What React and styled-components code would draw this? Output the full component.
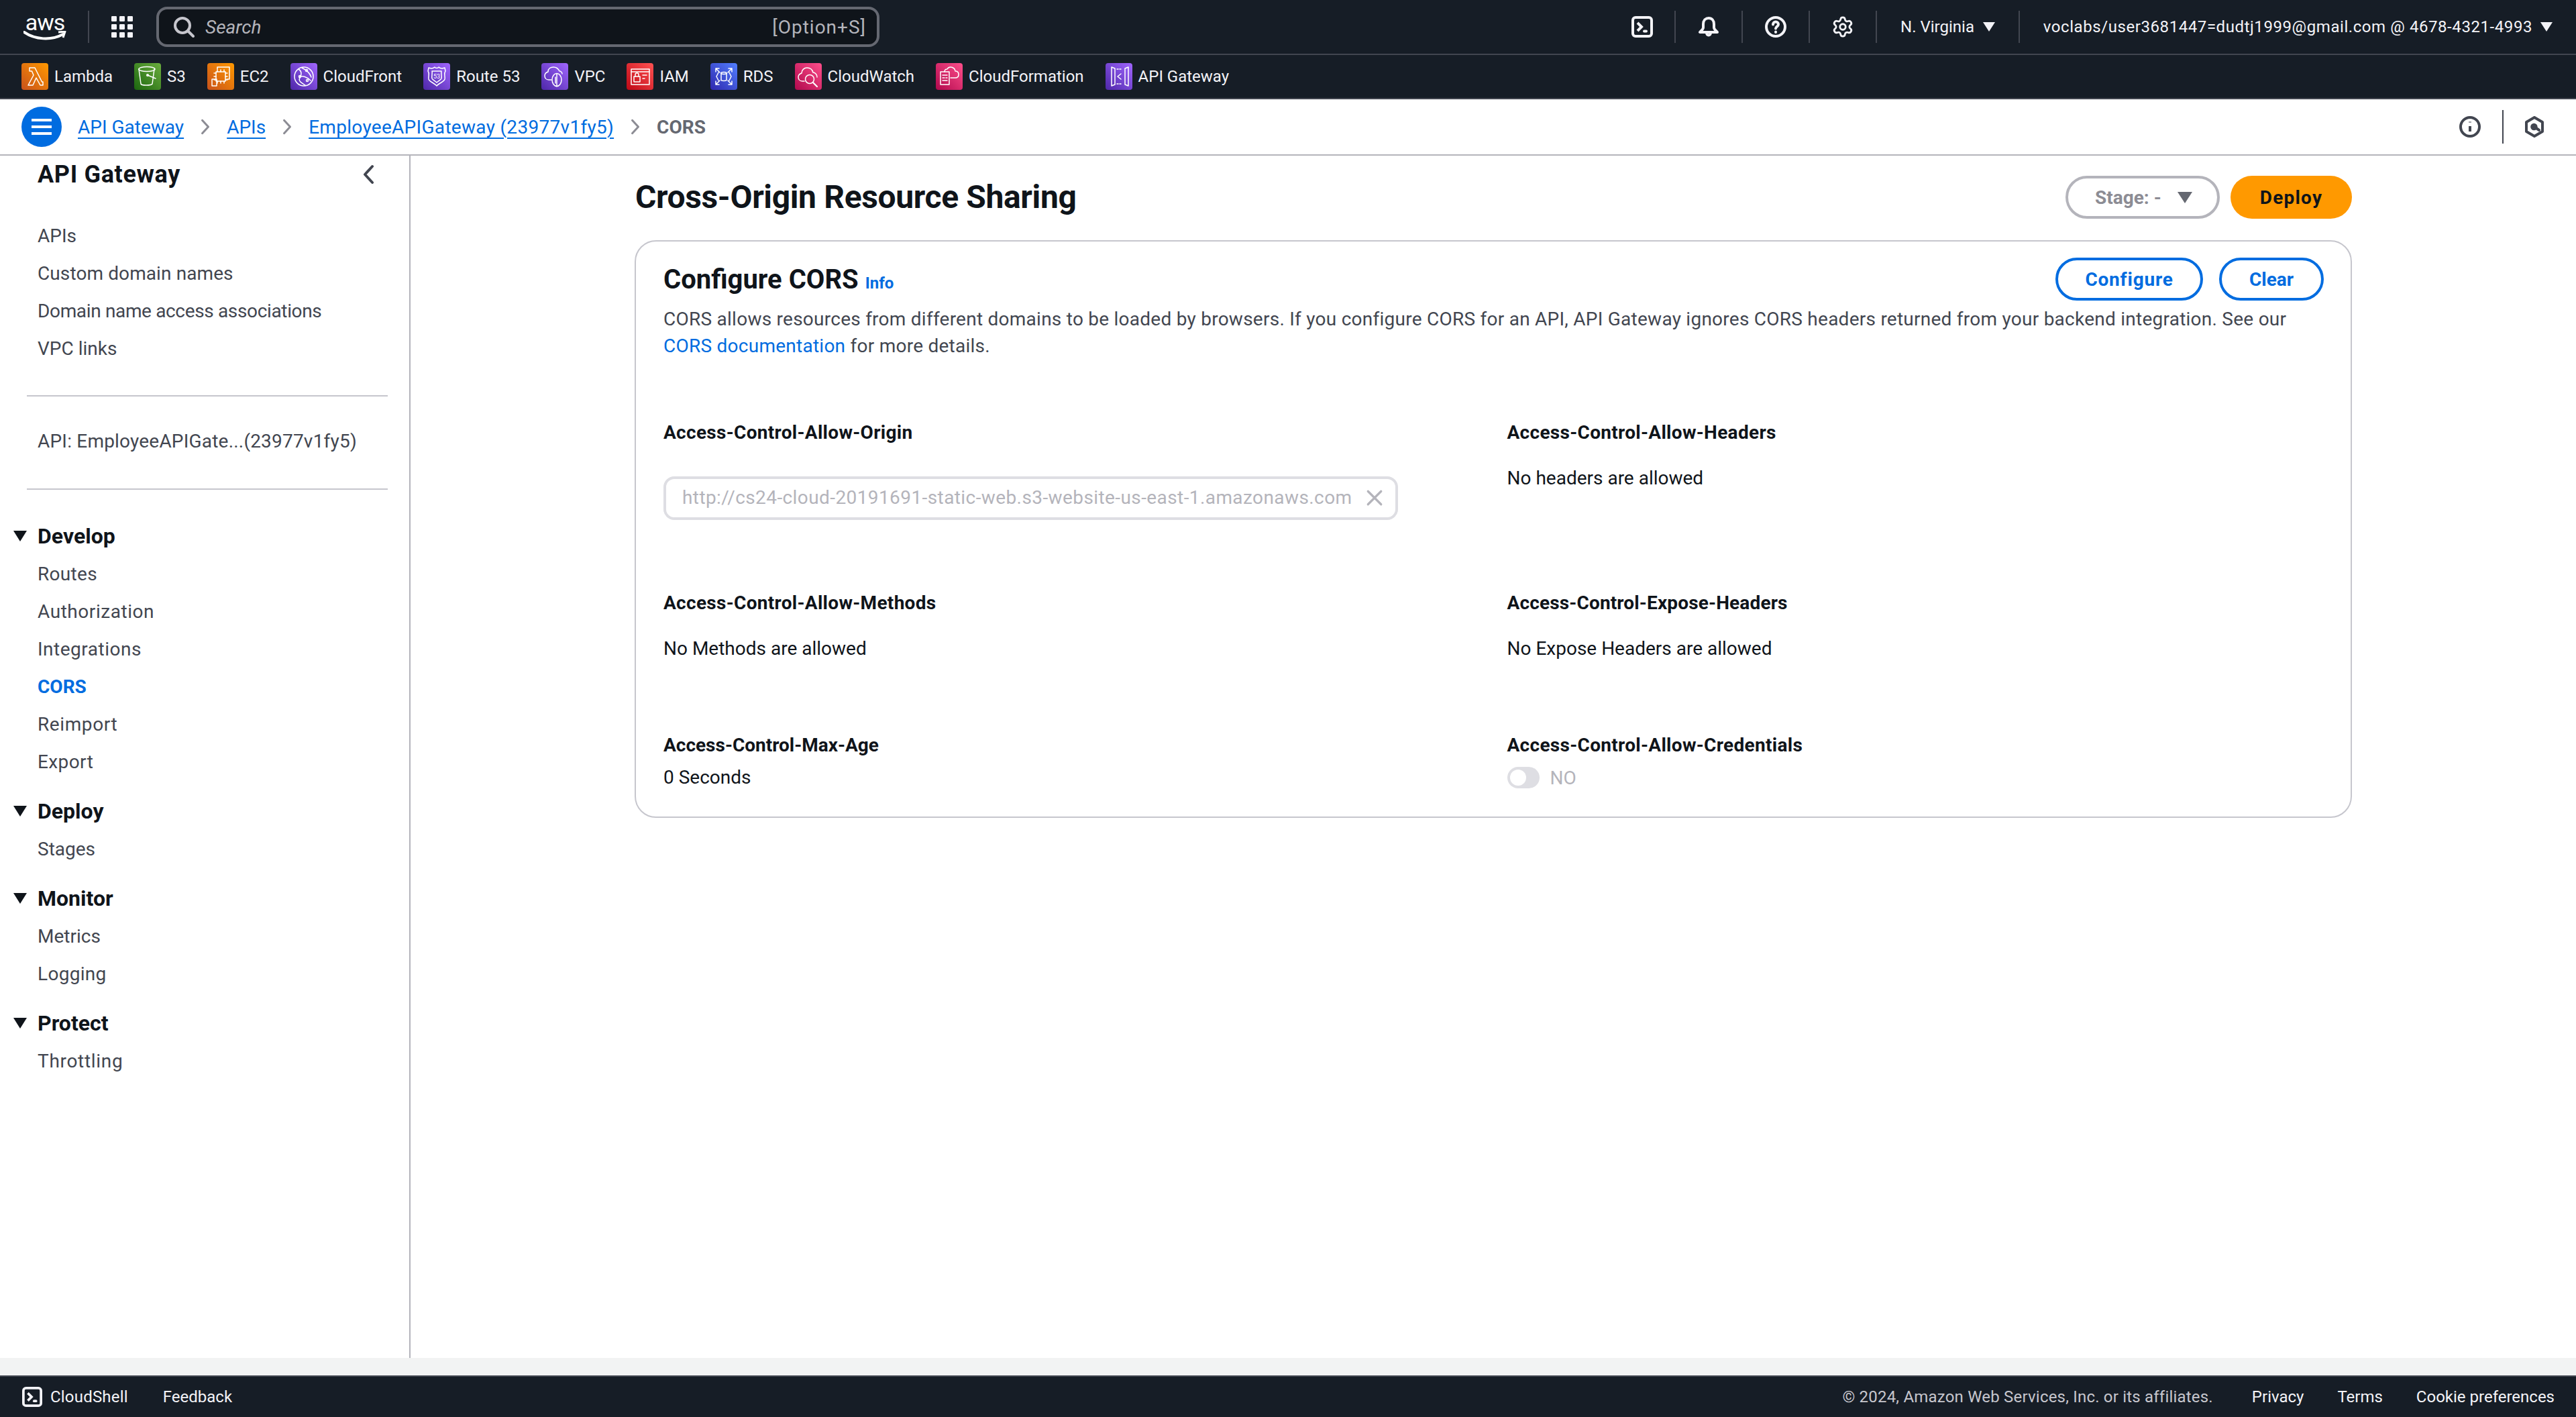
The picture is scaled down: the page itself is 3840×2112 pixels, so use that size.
import React from 'react';
import styled, { createGlobalStyle } from 'styled-components';
import { Settings } from 'lucide-react';

const FONT = 'Roboto, "Noto Sans", Arial, sans-serif';

const Global = createGlobalStyle`
  html, body { margin: 0; padding: 0; background: #fff; }
  body { font-family: ${FONT}; -webkit-font-smoothing: antialiased; }
  * { box-sizing: border-box; }
`;

const Page = styled.div`
  width: 3840px; height: 2112px; display: flex; flex-direction: column; overflow: hidden; background: #fff;
`;

/* Top navigation */
const TopBar = styled.header`
  height: 82px; flex: none; display: flex; align-items: center; background: #161d26;
  border-bottom: 2px solid #424650; padding: 0 35px; color: #f3f3f7;
`;
const Logo = styled.div`
  width: 64px; height: 44px; display: flex; flex-direction: column; align-items: center; flex: none; position: relative;
`;
const LogoWord = styled.span`
  font-size: 34px; line-height: 30px; color: #fff; font-weight: 400; letter-spacing: -1px; height: 28px;
`;
const BarRule = styled.span`
  width: 2px; height: ${p => p.$h || 48}px; background: #424650; flex: none; margin: ${p => p.$m || '0'};
`;
const SearchBox = styled.div`
  width: 1078px; height: 60px; margin-left: 34px; border: 4px solid #656871; border-radius: 16px; background: #0f141a;
  display: flex; align-items: center; padding: 0 16px 0 21px; color: #b4b4bb; font-size: 28px;
`;
const SearchText = styled.span`
  font-style: italic; margin-left: 16px; flex: 1;
`;
const Shortcut = styled.span`
  letter-spacing: 1px;
`;
const NavRight = styled.div`
  margin-left: auto; display: flex; align-items: center; height: 48px;
`;
const NavIcon = styled.span`
  width: ${p => p.$w || 98}px; display: flex; align-items: center; justify-content: ${p => p.$j || 'center'}; flex: none;
`;
const NavText = styled.span`
  font-size: 24px; color: #f3f3f7; white-space: nowrap; letter-spacing: ${p => p.$ls || 0}px;
`;
const CaretDown = styled.span`
  width: 0; height: 0; flex: none; display: inline-block;
  border-left: ${p => p.$s || 9}px solid transparent; border-right: ${p => p.$s || 9}px solid transparent;
  border-top: ${p => (p.$s || 9) * 1.6}px solid ${p => p.$c || '#f3f3f7'};
  margin-left: ${p => p.$ml || 14}px;
`;

/* Favourites */
const FavBar = styled.nav`
  height: 66px; flex: none; display: flex; align-items: center; gap: 32px; background: #161d26;
  border-bottom: 2px solid #424650; padding: 0 0 0 32px;
`;
const Fav = styled.span`
  display: flex; align-items: center; gap: 9px; font-size: 24px; color: #f3f3f7; white-space: nowrap;
`;
const Tile = styled.span`
  width: 40px; height: 40px; border-radius: 4px; flex: none; display: flex;
  background: linear-gradient(45deg, ${p => p.$from}, ${p => p.$to});
`;

/* Breadcrumbs */
const CrumbBar = styled.div`
  height: 84px; flex: none; display: flex; align-items: center; border-bottom: 2px solid #b4b4bb; padding: 0 46px 0 32px;
`;
const MenuButton = styled.span`
  width: 60px; height: 60px; border-radius: 50%; background: #006ce0; display: flex; flex-direction: column;
  align-items: center; justify-content: center; gap: 6px; flex: none; margin-right: 24px;
`;
const MenuLine = styled.i`
  display: block; width: 30px; height: 4px; background: #fff;
`;
const Crumb = styled.a`
  font-size: 28px; color: #006ce0; text-decoration: underline; text-underline-offset: 6px; text-decoration-thickness: 2px; white-space: nowrap;
  letter-spacing: ${p => p.$ls || 0}px;
`;
const CrumbSep = styled.span`
  width: 64px; display: flex; justify-content: center; flex: none;
`;
const CrumbCurrent = styled.span`
  font-size: 28px; color: #656871; font-weight: 700;
`;
const CrumbTools = styled.div`
  margin-left: auto; display: flex; align-items: center; height: 50px;
`;

/* Main */
const Main = styled.div`
  flex: 1; display: flex; min-height: 0;
`;
const Sidebar = styled.aside`
  width: 612px; flex: none; border-right: 2px solid #b4b4bb; padding: 6px 32px 0 0; color: #424650;
`;
const SideHead = styled.div`
  display: flex; align-items: center; justify-content: space-between; padding: 0 12px 0 56px; height: 44px; margin-bottom: 42px;
`;
const SideTitle = styled.h2`
  margin: 0; font-size: 36px; font-weight: 700; color: #0f141a; line-height: 44px; letter-spacing: .65px;
`;
const SideItem = styled.div`
  height: 56px; line-height: 56px; padding-left: 56px; font-size: 28px; white-space: nowrap;
  letter-spacing: ${p => p.$ls ?? 0.3}px;
  color: ${p => (p.$active ? '#006ce0' : '#424650')}; font-weight: ${p => (p.$active ? 700 : 400)};
`;
const SideRule = styled.hr`
  margin: ${p => p.$m || '41px 0 39px 40px'}; border: 0; height: 2px; background: #c6c6cd;
`;
const Section = styled.section`
  margin-top: ${p => p.$mt ?? 15}px;
`;
const SectionHead = styled.div`
  height: 59px; display: flex; align-items: center; padding-left: 20px; font-size: 32px; font-weight: 700; color: #0f141a;
`;
const SectionCaret = styled.span`
  width: 0; height: 0; margin-right: 16px; border-left: 10px solid transparent; border-right: 10px solid transparent; border-top: 16px solid #0f141a;
`;

const Content = styled.main`
  flex: 1; min-width: 0; padding: 30px 0 0; display: flex; justify-content: center;
`;
const Column = styled.div`
  width: 2560px;
`;
const PageHead = styled.div`
  display: flex; align-items: center; height: 64px; gap: 16px; margin-bottom: 32px;
`;
const PageTitle = styled.h1`
  margin: 0 auto 0 0; font-size: 48px; font-weight: 700; color: #0f141a; line-height: 64px; letter-spacing: -.36px; padding-left: 1px;
`;
const StageSelect = styled.span`
  height: 64px; width: 230px; border: 4px solid #b4b4bb; border-radius: 32px; display: flex; align-items: center; padding-left: 40px;
  font-size: 28px; font-weight: 700; color: #8c8c94;
`;
const DeployButton = styled.span`
  height: 64px; width: 181px; border-radius: 32px; background: #ff9900; display: flex; align-items: center; justify-content: center;
  font-size: 28px; font-weight: 700; color: #0f141a; letter-spacing: 1.2px;
`;
const Card = styled.section`
  border: 2px solid #c6c6cd; border-radius: 32px; padding: 24px 40px 38px 41px;
`;
const CardHead = styled.div`
  display: flex; align-items: center; height: 64px; gap: 24px;
`;
const CardTitle = styled.h2`
  margin: 0 auto 0 0; font-size: 40px; font-weight: 700; color: #0f141a; white-space: nowrap;
`;
const Info = styled.a`
  font-size: 24px; font-weight: 700; color: #006ce0; margin-left: 10px;
`;
const OutlineButton = styled.span`
  height: 64px; width: ${p => p.$w}px; border: 4px solid #006ce0; border-radius: 32px; display: flex; align-items: center; justify-content: center;
  font-size: 28px; font-weight: 700; color: #006ce0; letter-spacing: ${p => p.$ls || 0}px;
`;
const Desc = styled.p`
  margin: 8px 0 0; font-size: 28px; line-height: 40px; color: #424650; letter-spacing: .25px;
`;
const DocLink = styled.a`
  color: #006ce0;
`;
const Fields = styled.div`
  display: grid; grid-template-columns: 1fr 1fr; column-gap: 40px; row-gap: 104px; margin-top: 89px;
`;
const Field = styled.div``;
const Label = styled.div`
  font-size: 28px; line-height: 40px; font-weight: 700; color: #0f141a; letter-spacing: ${p => p.$ls ?? 0.3}px;
`;
const Value = styled.div`
  font-size: 28px; line-height: 40px; color: #0f141a; margin-top: ${p => p.$mt ?? 28}px;
`;
const ClearInput = styled.div`
  width: 1095px; height: 65px; margin-top: 45px; border: 4px solid #dedee3; border-radius: 16px; display: flex; align-items: center;
  padding: 0 18px 2px 24px; font-size: 28px; color: #b4b4bb; white-space: nowrap; justify-content: space-between; letter-spacing: .41px;
`;
const ToggleRow = styled.div`
  display: flex; align-items: center; gap: 16px; margin-top: 8px; height: 40px; font-size: 28px; color: #b4b4bb;
`;
const Toggle = styled.span`
  width: 48px; height: 32px; border-radius: 16px; background: #dedee3; padding: 4px; display: flex; flex: none;
`;
const ToggleKnob = styled.i`
  width: 24px; height: 24px; border-radius: 50%; background: #fff; display: block;
`;

const Strip = styled.div`
  height: 26px; flex: none; background: #f2f3f3;
`;
const Footer = styled.footer`
  height: 62px; flex: none; background: #161d26; border-top: 2px solid #424650; display: flex; align-items: center;
  padding: 0 32px 0 33px; font-size: 24px; color: #f3f3f7;
`;
const FooterLeft = styled.div`
  display: flex; align-items: center;
`;
const FooterLink = styled.span`
  margin-left: ${p => p.$ml || 0}px; white-space: nowrap; letter-spacing: ${p => p.$ls || 0}px;
`;
const Copyright = styled.span`
  margin-left: auto; color: #c6c6cd; white-space: nowrap; letter-spacing: .2px;
`;

/* Icons */
const Stroke = ({ size = 32, color = '#f3f3f7', sw = 2, children }) => (
  <svg width={size} height={size} viewBox="0 0 16 16" fill="none" stroke={color} strokeWidth={sw} strokeLinecap="round" strokeLinejoin="round">
    {children}
  </svg>
);
const ShellIcon = ({ size = 32 }) => (
  <Stroke size={size} sw={2}>
    <rect x="1" y="1" width="14" height="14" rx="2" />
    <path d="M4.500 5 7.500 8 4.500 11" strokeLinecap="butt" strokeLinejoin="miter" />
    <path d="M9.500 11.300h1.500" />
  </Stroke>
);
const GridIcon = () => (
  <svg width="34" height="34" viewBox="0 0 34 34" fill="#f3f3f7">
    {[1, 13, 25].map(y => [1, 13, 25].map(x => <rect key={`${x}-${y}`} x={x} y={y} width="8" height="8" rx="1.2" />))}
  </svg>
);

const Glyph = ({ children }) => (
  <svg width="40" height="40" viewBox="0 0 40 40" fill="none" stroke="#fff" strokeWidth="1.5" strokeLinejoin="round" strokeLinecap="round">
    {children}
  </svg>
);
const FAVS = [
  ['Lambda', '#c8511b', '#ff9900', <path key="a" d="M10 33h7l5-11 6 11h4v-5h-1.500L20 7h-8v5h3.500l2.500 6-8 15z" />],
  ['S3', '#1b660f', '#6cae3e', <g key="a"><ellipse cx="19" cy="9" rx="12" ry="3.500" /><path d="M7 9l3 22c.300 1.500 4 2 8 2s8-.500 9-2l3-22" /><path d="M20 18l12 5" /><circle cx="20" cy="18" r="1.300" /></g>],
  ['EC2', '#c8511b', '#ff9900', <g key="a"><rect x="13" y="13" width="14" height="14" /><path d="M15 10v3M20 10v3M25 10v3M15 27v3M20 27v3M25 27v3M10 15h3M10 20h3M10 25h3M27 15h3M27 20h3M27 25h3" /><path d="M15 9V6h18v18h-4M7 24h7v10H7z" /></g>],
  ['CloudFront', '#4d27a8', '#a166ff', <g key="a"><circle cx="20" cy="20" r="14" /><path d="M12 9c5 3 5 8 2 13s3 8 8 11M17 7c6 3 12 8 14 14M13 21c5-3 12 0 17 5" /><circle cx="14" cy="20" r="1.500" /><circle cx="24" cy="11" r="1.500" /><circle cx="25" cy="26" r="1.500" /></g>],
  ['Route 53', '#4d27a8', '#a166ff', <g key="a"><path d="M12 8c2 0 4-1 5-2 1 2 5 2 6 0 1 1 3 2 5 2l4-1 1 5c-3 4 0 7-1 12-1 4-9 6-12 10-3-4-11-6-12-10-1-5 2-8-1-12l1-5z" /><path d="M13 12h14c-1 4 1 7 0 11-1 2-5 4-7 6-2-2-6-4-7-6-1-4 1-7 0-11z" /><text x="20" y="23" fontSize="9" fill="#fff" stroke="none" textAnchor="middle" fontFamily={FONT}>53</text></g>],
  ['VPC', '#4d27a8', '#a166ff', <g key="a"><path d="M15 25h-4c-4 0-6-3-6-6s2-5 5-6c0-5 4-7 8-7s7 2 9 6c2 0 4 2 4 4" /><ellipse cx="23" cy="25" rx="7" ry="9.500" /><path d="M23 16v19" /><path d="M21 21v9" /></g>],
  ['IAM', '#bd0816', '#ff5252', <g key="a"><rect x="7" y="9" width="27" height="23" /><path d="M7 13h27" /><rect x="11" y="20" width="9" height="8" /><path d="M13 20v-3c0-3 5-3 5 0v3" /><path d="M24 18h6M24 23h3" /></g>],
  ['RDS', '#2e27ad', '#527fff', <g key="a"><path d="M8 8l6 6M8 8v5M8 8h5M32 8l-6 6M32 8v5M32 8h-5M8 32l6-6M8 32v-5M8 32h5M32 32l-6-6M32 32v-5M32 32h-5" /><ellipse cx="20" cy="15" rx="4" ry="1.500" /><path d="M16 15v10c0 2 8 2 8 0V15" /><path d="M12 14l-3 6 3 6M28 14l3 6-3 6" /></g>],
  ['CloudWatch', '#b0084d', '#ff4f8b', <g key="a"><path d="M14 27h-3c-4 0-6-3-6-6s2-5 5-6c0-5 4-8 8-8 5 0 8 3 9 7 3 0 6 3 6 7" /><circle cx="22" cy="24" r="6.500" /><path d="M27 29l6 6" strokeWidth="2.200" /></g>],
  ['CloudFormation', '#b0084d', '#ff4f8b', <g key="a"><path d="M13 13c0-3 2-4 4-4 1-2 3-3 5-3 4 0 7 3 7 6 3 0 5 2 5 5s-2 5-5 5h-7" /><path d="M7 13h13v19H7z" /><path d="M10 18h7M10 22h3M15 22h2M10 26h7" /></g>],
  ['API Gateway', '#4d27a8', '#a166ff', <g key="a"><path d="M9 6l5 2v24l-5 2zM34 6l-5 2v24l5 2z" /><path d="M17 9h6M17 31h6" strokeDasharray="2 2" /><path d="M23 16l-5 4 5 4" /></g>],
];

const Chevron = () => (
  <Stroke size={24} color="#8c8c94"><path d="M5 1.500 11 8l-6 6.500" /></Stroke>
);

export default function App() {
  return (
    <Page>
      <Global />
      <TopBar>
        <Logo>
          <LogoWord>aws</LogoWord>
          <svg width="64" height="16" viewBox="0 0 64 16" fill="none">
            <path d="M1 2c16 11 40 13 58 3" stroke="#fff" strokeWidth="4" strokeLinecap="round" />
            <path d="M52 2l10-1-3 9" stroke="#fff" strokeWidth="3" strokeLinejoin="round" />
          </svg>
        </Logo>
        <BarRule $h={48} $m="0 32px 0 32px" />
        <GridIcon />
        <SearchBox>
          <Stroke size={32} color="#c6c6cd">
            <circle cx="7" cy="7" r="5.500" />
            <path d="M11 11l4 4" />
          </Stroke>
          <SearchText>Search</SearchText>
          <Shortcut>[Option+S]</Shortcut>
        </SearchBox>
        <NavRight>
          <NavIcon $w={96}><ShellIcon /></NavIcon>
          <BarRule />
          <NavIcon><Stroke><path d="M8 1.500c-2.500 0-4 2-4 4.500v2.500c0 1.500-1.500 2.300-2.500 3.500h13c-1-1.200-2.500-2-2.500-3.500V6c0-2.500-1.500-4.500-4-4.500z" /><path d="M6.500 12.500c0 2.300 3 2.300 3 0" /></Stroke></NavIcon>
          <BarRule />
          <NavIcon><Stroke><circle cx="8" cy="8" r="7" /><path d="M6 6.200c0-1.300 1-2 2-2s2 .800 2 1.900c0 1.500-2 1.700-2 3.200" /><path d="M8 11.700v.3" /></Stroke></NavIcon>
          <BarRule />
          <NavIcon><Settings size={34} strokeWidth={2} color="#f3f3f7" /></NavIcon>
          <BarRule />
          <NavIcon $w={211}><NavText>N. Virginia</NavText><CaretDown $ml={13} /></NavIcon>
          <BarRule />
          <NavIcon $w={794} $j="flex-end"><NavText $ls={0.57}>voclabs/user3681447=dudtj1999@gmail.com @ 4678-4321-4993</NavText><CaretDown $ml={12} /></NavIcon>
        </NavRight>
      </TopBar>

      <FavBar>
        {FAVS.map(([name, from, to, glyph]) => (
          <Fav key={name}>
            <Tile $from={from} $to={to}><Glyph>{glyph}</Glyph></Tile>
            {name}
          </Fav>
        ))}
      </FavBar>

      <CrumbBar>
        <MenuButton><MenuLine /><MenuLine /><MenuLine /></MenuButton>
        <Crumb>API Gateway</Crumb>
        <CrumbSep><Chevron /></CrumbSep>
        <Crumb>APIs</Crumb>
        <CrumbSep><Chevron /></CrumbSep>
        <Crumb $ls={0.3}>EmployeeAPIGateway (23977v1fy5)</Crumb>
        <CrumbSep><Chevron /></CrumbSep>
        <CrumbCurrent>CORS</CrumbCurrent>
        <CrumbTools>
          <Stroke color="#424650"><circle cx="8" cy="8" r="7" /><path d="M8 7.500v4M8 4.300v.5" strokeLinecap="butt" /></Stroke>
          <BarRule $h={50} $m="0 30px 0 32px" />
          <Stroke color="#424650">
            <path d="M8 1l6 3.500v7L8 15l-6-3.500v-7z" />
            <circle cx="7.700" cy="8" r="1.600" fill="#424650" />
            <path d="M8 8l3.500 2.500" />
          </Stroke>
        </CrumbTools>
      </CrumbBar>

      <Main>
        <Sidebar>
          <SideHead>
            <SideTitle>API Gateway</SideTitle>
            <Stroke size={32} color="#424650"><path d="M10.500 2 5 8l5.500 6" /></Stroke>
          </SideHead>
          <SideItem $ls={0}>APIs</SideItem>
          <SideItem $ls={0.1}>Custom domain names</SideItem>
          <SideItem $ls={-0.35}>Domain name access associations</SideItem>
          <SideItem $ls={0}>VPC links</SideItem>
          <SideRule />
          <SideItem $ls={0.2}>API: EmployeeAPIGate...(23977v1fy5)</SideItem>
          <SideRule $m="42px 0 39px 40px" />
          <Section $mt={0}>
            <SectionHead><SectionCaret />Develop</SectionHead>
            <SideItem>Routes</SideItem>
            <SideItem $ls={0.55}>Authorization</SideItem>
            <SideItem $ls={0.5}>Integrations</SideItem>
            <SideItem $ls={0} $active>CORS</SideItem>
            <SideItem $ls={0.6}>Reimport</SideItem>
            <SideItem $ls={0.4}>Export</SideItem>
          </Section>
          <Section>
            <SectionHead><SectionCaret />Deploy</SectionHead>
            <SideItem $ls={0}>Stages</SideItem>
          </Section>
          <Section>
            <SectionHead><SectionCaret />Monitor</SectionHead>
            <SideItem $ls={0}>Metrics</SideItem>
            <SideItem>Logging</SideItem>
          </Section>
          <Section>
            <SectionHead><SectionCaret />Protect</SectionHead>
            <SideItem $ls={0.7}>Throttling</SideItem>
          </Section>
        </Sidebar>
        <Content>
          <Column>
            <PageHead>
              <PageTitle>Cross-Origin Resource Sharing</PageTitle>
              <StageSelect>Stage: -<CaretDown $s={11} $c="#656871" $ml={24} /></StageSelect>
              <DeployButton>Deploy</DeployButton>
            </PageHead>
            <Card>
              <CardHead>
                <CardTitle>Configure CORS<Info>Info</Info></CardTitle>
                <OutlineButton $w={220} $ls={0.8}>Configure</OutlineButton>
                <OutlineButton $w={156}>Clear</OutlineButton>
              </CardHead>
              <Desc>
                CORS allows resources from different domains to be loaded by browsers. If you configure CORS for an API, API Gateway ignores CORS headers returned from your backend integration. See our <DocLink>CORS documentation</DocLink> for more details.
              </Desc>
              <Fields>
                <Field>
                  <Label>Access-Control-Allow-Origin</Label>
                  <ClearInput>
                    http://cs24-cloud-20191691-static-web.s3-website-us-east-1.amazonaws.com
                    <Stroke size={26} color="#b4b4bb"><path d="M2 2l12 12M14 2 2 14" /></Stroke>
                  </ClearInput>
                </Field>
                <Field>
                  <Label>Access-Control-Allow-Headers</Label>
                  <Value>No headers are allowed</Value>
                </Field>
                <Field>
                  <Label>Access-Control-Allow-Methods</Label>
                  <Value>No Methods are allowed</Value>
                </Field>
                <Field>
                  <Label $ls={0.15}>Access-Control-Expose-Headers</Label>
                  <Value>No Expose Headers are allowed</Value>
                </Field>
                <Field>
                  <Label $ls={0}>Access-Control-Max-Age</Label>
                  <Value $mt={8}>0 Seconds</Value>
                </Field>
                <Field>
                  <Label>Access-Control-Allow-Credentials</Label>
                  <ToggleRow><Toggle><ToggleKnob /></Toggle>NO</ToggleRow>
                </Field>
              </Fields>
            </Card>
          </Column>
        </Content>
      </Main>

      <Strip />
      <Footer>
        <FooterLeft>
          <ShellIcon size={30} />
          <FooterLink $ml={12} $ls={0.2}>CloudShell</FooterLink>
          <FooterLink $ml={52}>Feedback</FooterLink>
        </FooterLeft>
        <Copyright>© 2024, Amazon Web Services, Inc. or its affiliates.</Copyright>
        <FooterLink $ml={58}>Privacy</FooterLink>
        <FooterLink $ml={50}>Terms</FooterLink>
        <FooterLink $ml={50}>Cookie preferences</FooterLink>
      </Footer>
    </Page>
  );
}
